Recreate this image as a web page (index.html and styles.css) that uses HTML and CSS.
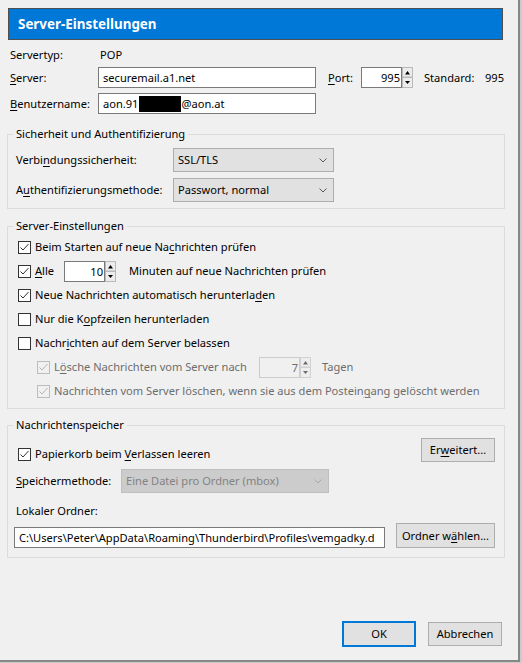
FILE: index.html
```html
<!DOCTYPE html>
<html lang="de">
<head>
    <meta charset="UTF-8">
    <meta name="viewport" content="width=device-width, initial-scale=1.0">
    <title>Server-Einstellungen</title>
    <link rel="stylesheet" href="styles.css">
</head>
<body>
    <svg class="defs" width="0" height="0">
        <symbol id="spin" viewBox="0 0 11 21">
            <rect x="0.5" y="0.5" width="10" height="9.5" fill="#ececec" stroke="#b9b9b9"/>
            <rect x="0.5" y="10.5" width="10" height="10" fill="#ececec" stroke="#b9b9b9"/>
            <path d="M3 7.5h5L5.5 4z"/>
            <path d="M3 14h5l-2.5 3z"/>
        </symbol>
        <symbol id="chevron" viewBox="0 0 8 5">
            <polyline points="0.5,0.5 4,4 7.5,0.5" fill="none" stroke="currentColor"/>
        </symbol>
        <symbol id="tick" viewBox="0 0 11 11">
            <polyline points="1.5,5.5 4,8 9.5,2" fill="none" stroke="currentColor"/>
        </symbol>
    </svg>

    <div class="window">
        <div class="title">Server-Einstellungen</div>

        <div class="top">
            <div class="row row-type">
                <span class="lbl lbl-type">Servertyp:</span>
                <span>POP</span>
            </div>
            <div class="row row-server">
                <span class="lbl"><u>S</u>erver:</span>
                <div class="field host">securemail.a1.net</div>
                <span class="port-lbl"><u>P</u>ort:</span>
                <div class="field num">995</div>
                <svg class="spin"><use href="#spin"/></svg>
                <span class="std-lbl">Standard:</span>
                <span>995</span>
            </div>
            <div class="row row-user">
                <span class="lbl"><u>B</u>enutzername:</span>
                <div class="field host">aon.91<span class="redact"></span>@aon.at</div>
            </div>
        </div>

        <fieldset class="group group-auth">
            <legend>Sicherheit und Authentifizierung</legend>
            <div class="row sel-row">
                <span class="sel-lbl">Verbi<u>n</u>dungssicherheit:</span>
                <div class="select">SSL/TLS<svg class="chev"><use href="#chevron"/></svg></div>
            </div>
            <div class="row sel-row">
                <span class="sel-lbl">A<u>u</u>thentifizierungsmethode:</span>
                <div class="select">Passwort, normal<svg class="chev"><use href="#chevron"/></svg></div>
            </div>
        </fieldset>

        <fieldset class="group group-server">
            <legend>Server-Einstellungen</legend>
            <div class="row check">
                <span class="cb"><svg><use href="#tick"/></svg></span>
                <span>Beim Starten auf neue Na<u>c</u>hrichten prüfen</span>
            </div>
            <div class="row check">
                <span class="cb"><svg><use href="#tick"/></svg></span>
                <span class="alle"><u>A</u>lle</span>
                <div class="field num">10</div>
                <svg class="spin"><use href="#spin"/></svg>
                <span class="after-spin">Minuten auf neue Nachrichten prüfen</span>
            </div>
            <div class="row check">
                <span class="cb"><svg><use href="#tick"/></svg></span>
                <span>Neue Nachrichten automatisch herunterla<u>d</u>en</span>
            </div>
            <div class="row check">
                <span class="cb"></span>
                <span>Nur die K<u>o</u>pfzeilen herunterladen</span>
            </div>
            <div class="row check">
                <span class="cb"></span>
                <span>Nachr<u>i</u>chten auf dem Server belassen</span>
            </div>
            <div class="row check sub disabled">
                <span class="cb"><svg><use href="#tick"/></svg></span>
                <span class="days-lbl">L<u>ö</u>sche Nachrichten vom Server nach</span>
                <div class="field num">7</div>
                <svg class="spin"><use href="#spin"/></svg>
                <span class="after-spin">Tagen</span>
            </div>
            <div class="row check sub disabled">
                <span class="cb"><svg><use href="#tick"/></svg></span>
                <span>Nachrichten vom Server löschen, wenn sie aus dem Postein<u>g</u>ang gelöscht werden</span>
            </div>
        </fieldset>

        <fieldset class="group group-store">
            <legend>Nachrichtenspeicher</legend>
            <div class="row store-top">
                <div class="row check trash">
                    <span class="cb"><svg><use href="#tick"/></svg></span>
                    <span>Papierkorb beim <u>V</u>erlassen leeren</span>
                </div>
                <button class="btn btn-more">Er<u>w</u>eitert...</button>
            </div>
            <div class="row store-method">
                <span class="method-lbl"><u>S</u>peichermethode:</span>
                <div class="select select-off">Eine Datei pro Ordner (mbox)<svg class="chev"><use href="#chevron"/></svg></div>
            </div>
            <div class="local-lbl">Lokaler Ordner:</div>
            <div class="row store-path">
                <div class="field path">C:\Users\Peter\AppData\Roaming\Thunderbird\Profiles\vemgadky.d</div>
                <button class="btn btn-pick">Ordner w<u>ä</u>hlen...</button>
            </div>
        </fieldset>

        <div class="footer">
            <button class="btn btn-ok">OK</button>
            <button class="btn btn-cancel">Abbrechen</button>
        </div>
    </div>
</body>
</html>
```

FILE: styles.css
```css
* {
    box-sizing: border-box;
}
body {
    margin: 0;
    background: #cbcbcb;
    font-family: "Noto Sans", sans-serif;
    font-size: 11.1px;
    line-height: 16px;
    color: #000;
}
u {
    text-decoration-thickness: 1px;
    text-underline-offset: 2px;
}
.defs {
    position: absolute;
}

.window {
    width: 520px;
    height: 662px;
    padding-top: 8px;
    background: #f0f0f0;
    border-right: 2px solid #878787;
    border-bottom: 2px solid #878787;
}
.title {
    margin-left: 8px;
    width: 495px;
    height: 32px;
    border: 1px solid #4f4f4f;
    background: #0078d7;
    color: #fff;
    font-weight: bold;
    font-size: 13.4px;
    line-height: 30px;
    padding-left: 9px;
}

.row {
    display: flex;
    align-items: center;
    white-space: nowrap;
}

/* top block: type, server, user */
.top {
    padding-left: 10px;
}
.row-type {
    margin-top: 5px;
    height: 20px;
}
.row-server {
    margin-top: 2px;
    height: 21px;
}
.row-user {
    margin-top: 5px;
    height: 21px;
}
.lbl {
    width: 88px;
}
.lbl-type {
    width: 90px;
}
.field {
    height: 21px;
    border: 1px solid #7a7a7a;
    background: #fff;
    padding: 0 4px;
    line-height: 19px;
    white-space: nowrap;
    overflow: hidden;
    flex: none;
}
.host {
    width: 218px;
    display: flex;
    align-items: center;
}
.redact {
    display: inline-block;
    width: 42px;
    height: 16px;
    background: #000;
    margin: 0 0 0 1px;
}
.port-lbl {
    margin-left: 12px;
    width: 33px;
}
.num {
    width: 41px;
    text-align: right;
    padding-right: 1px;
}
.spin {
    width: 11px;
    height: 21px;
    flex: none;
}
.std-lbl {
    margin-left: 11px;
    width: 61px;
}

/* groups */
.group {
    margin: 12px 0 0 7px;
    width: 498px;
    min-width: 0;
    border: 1px solid #dcdcdc;
    padding: 6px 9px 6px 8px;
}
.group legend {
    padding: 0 3px;
    margin-left: -3px;
    line-height: 16px;
}
.group-server {
    margin-top: 9px;
    padding-top: 1px;
    padding-bottom: 5px;
}
.group-store {
    margin-top: 8px;
    padding-top: 5px;
    padding-bottom: 9px;
}

.sel-row {
    height: 24px;
}
.sel-row + .sel-row {
    margin-top: 6px;
}
.sel-lbl {
    width: 157px;
}
.select {
    width: 161px;
    height: 24px;
    border: 1px solid #adadad;
    background: #e1e1e1;
    padding: 0 6px 0 4px;
    display: flex;
    align-items: center;
    justify-content: space-between;
}
.chev {
    width: 8px;
    height: 5px;
    color: #5a5a5a;
}
.select-off {
    width: 208px;
    background: #cccccc;
    border-color: #bfbfbf;
    color: #838383;
}
.select-off .chev {
    color: #a8a8a8;
}

/* checkbox rows */
.check {
    height: 24px;
    padding-left: 2px;
}
.cb {
    width: 13px;
    height: 13px;
    flex: none;
    border: 1px solid #333;
    background: #fff;
    margin-right: 4px;
    color: #333;
}
.cb svg {
    display: block;
    width: 11px;
    height: 11px;
}
.alle {
    width: 29px;
}
.after-spin {
    margin-left: 13px;
}
.sub {
    padding-left: 21px;
}
.disabled {
    color: #6d6d6d;
}
.disabled .cb {
    border-color: #bcbcbc;
    background: #f0f0f0;
    color: #b4b4b4;
}
.disabled .field {
    border-color: #cccccc;
    background: #f0f0f0;
}
.disabled .spin {
    opacity: 0.55;
}
.days-lbl {
    width: 205px;
}
.disabled .after-spin {
    margin-left: 11px;
}

/* message store */
.store-top {
    height: 24px;
    justify-content: space-between;
    align-items: flex-end;
}
.trash {
    height: 16px;
}
.btn {
    font: inherit;
    color: #000;
    background: #e1e1e1;
    border: 1px solid #adadad;
    padding: 0;
    height: 24px;
    flex: none;
}
.btn-more {
    width: 74px;
}
.store-method {
    margin-top: 7px;
    height: 24px;
}
.method-lbl {
    width: 105px;
}
.local-lbl {
    margin-top: 10px;
}
.store-path {
    margin-top: 4px;
    height: 25px;
    align-items: flex-end;
    justify-content: space-between;
}
.path {
    margin-left: -2px;
    width: 371px;
}
.btn-pick {
    width: 99px;
    height: 25px;
}

.footer {
    margin-top: 63px;
    display: flex;
    justify-content: flex-end;
    align-items: center;
    gap: 12px;
    padding-right: 16px;
}
.btn-ok {
    width: 74px;
    height: 26px;
    border: 2px solid #0078d7;
}
.btn-cancel {
    width: 74px;
}
```
